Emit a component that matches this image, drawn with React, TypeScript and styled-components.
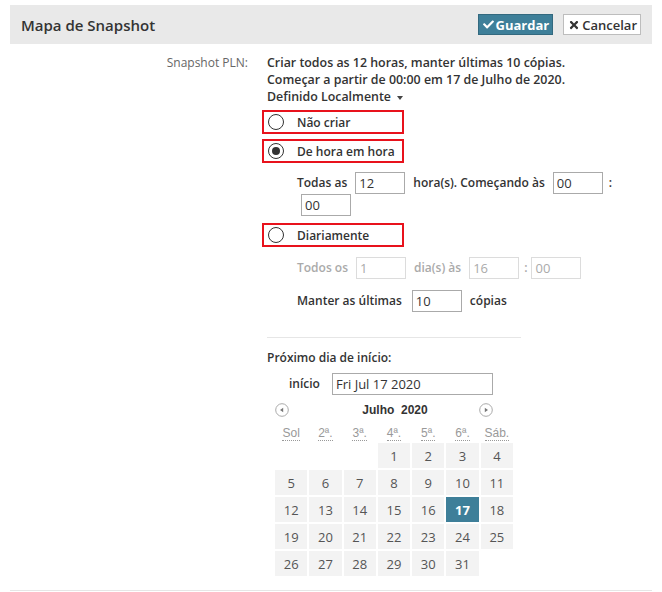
import React from 'react';
import styled, { createGlobalStyle } from 'styled-components';
import { FaCheck, FaTimes } from 'react-icons/fa';

const Global = createGlobalStyle`
  body {
    margin: 0;
    background: #fff;
    font-family: 'Open Sans', 'Liberation Sans', sans-serif;
    color: #333;
  }
`

const Page = styled.div`
  padding: 5px 10px 0 10px;
  width: 662px;
  box-sizing: border-box;
`
const Header = styled.div`
  display: flex;
  align-items: center;
  height: 39px;
  background: #e9e9e9;
  padding: 0 11px;
`
const Title = styled.div`
  flex: 1;
  font-size: 15px;
  font-weight: 600;
  color: #333;
`
const Button = styled.button<{ primary?: boolean }>`
  display: flex;
  align-items: center;
  gap: 2px;
  height: 21px;
  padding: 0 3px 0 4px;
  margin-left: ${p => p.primary ? '0' : '10px'};
  font-family: 'Open Sans', sans-serif;
  font-size: 13px;
  font-weight: ${p => p.primary ? 700 : 600};
  color: ${p => p.primary ? '#fff' : '#333'};
  background: ${p => p.primary ? '#3e7f99' : '#fff'};
  border: 1px solid ${p => p.primary ? '#33697f' : '#bdbdbd'};
  border-radius: 0;
  svg { font-size: ${p => p.primary ? 11 : 12}px; }
`
const Body = styled.div`
  display: grid;
  grid-template-columns: 238px 1fr;
  column-gap: 19px;
  padding-top: 10px;
  padding-bottom: 12px;
  border-bottom: 1px solid #e6e6e6;
`
const Label = styled.div`
  text-align: right;
  font-size: 12px;
  color: #666;
  line-height: 17px;
`
const Content = styled.div`
  display: flex;
  flex-direction: column;
`
const Summary = styled.div`
  font-size: 12.4px;
  font-weight: 600;
  line-height: 17px;
`
const Caret = styled.span`
  display: inline-block;
  margin-left: 6px;
  vertical-align: middle;
  border-left: 3.5px solid transparent;
  border-right: 3.5px solid transparent;
  border-top: 4px solid #444;
`
const Option = styled.label<{ gapTop: number }>`
  display: flex;
  align-items: center;
  width: 142px;
  height: 24px;
  box-sizing: border-box;
  margin-left: -5px;
  margin-top: ${p => p.gapTop}px;
  padding-left: 4px;
  border: 2px solid #e8121c;
  font-size: 12px;
  font-weight: 600;
`
const Radio = styled.span<{ checked?: boolean }>`
  position: relative;
  width: 16px;
  height: 16px;
  box-sizing: border-box;
  border-radius: 50%;
  border: 1.4px solid #333;
  margin-right: 13px;
  &::after {
    content: '';
    display: ${p => p.checked ? 'block' : 'none'};
    position: absolute;
    left: 2.5px;
    top: 2.5px;
    width: 8.2px;
    height: 8.2px;
    border-radius: 50%;
    background: #333;
  }
`
const SubRow = styled.div<{ disabled?: boolean; top: number }>`
  display: flex;
  flex-wrap: wrap;
  align-items: center;
  max-width: 340px;
  margin-left: 30px;
  margin-top: ${p => p.top}px;
  font-size: 12px;
  font-weight: 600;
  color: ${p => p.disabled ? '#aaa' : '#333'};
`
const Text = styled.span<{ gap?: number }>`
  margin-right: ${p => p.gap ?? 8}px;
  line-height: 22px;
`
const Field = styled.input<{ w?: number; gap?: number; indent?: number }>`
  width: ${p => p.w ?? 50}px;
  height: 22px;
  box-sizing: border-box;
  margin: 0 ${p => p.gap ?? 8}px 0 ${p => p.indent ?? 0}px;
  padding: 0 3px;
  border: 1px solid #aaa;
  border-radius: 0;
  font-family: 'Open Sans', sans-serif;
  font-size: 13px;
  color: #333;
  background: #fff;
  &:disabled {
    border-color: #dcdcdc;
    color: #aaa;
  }
`
const Divider = styled.div`
  width: 254px;
  height: 1px;
  background: #e6e6e6;
  margin-top: 25px;
`
const SectionTitle = styled.div`
  margin-top: 11px;
  font-size: 12px;
  font-weight: 600;
  line-height: 17px;
`
const StartRow = styled.div`
  display: flex;
  align-items: center;
  margin: 7px 0 0 22px;
  font-size: 12px;
  font-weight: 600;
`
const Calendar = styled.div`
  margin: 8px 0 0 8px;
  width: 242px;
`
const Nav = styled.div`
  display: flex;
  align-items: center;
  justify-content: space-between;
  width: 218px;
  height: 14px;
  font-family: 'Liberation Sans', Arial, sans-serif;
  font-size: 12px;
  font-weight: 700;
  color: #333;
`
const Month = styled.span`
  white-space: pre;
  margin-left: 22px;
`
const Grid = styled.table`
  border-collapse: separate;
  border-spacing: 2px;
  table-layout: fixed;
  width: 242px;
  margin: 5px 0 0 -2px;
  th {
    height: 17px;
    padding: 0;
    font-family: 'Liberation Sans', Arial, sans-serif;
    font-size: 12px;
    font-weight: 400;
    color: #999;
  }
  abbr {
    text-decoration: none;
    border-bottom: 1px dotted #999;
  }
`
const Day = styled.td<{ active?: boolean; empty?: boolean }>`
  height: 25px;
  padding: 0;
  text-align: center;
  font-size: 13px;
  font-weight: ${p => p.active ? 700 : 400};
  color: ${p => p.active ? '#fff' : '#555'};
  background: ${p => p.empty ? 'transparent' : p.active ? '#3e7f99' : '#f3f3f3'};
`

const Arrow = ({ dir }: { dir: 'left' | 'right' }) => (
  <svg width="14" height="14" viewBox="0 0 14 14">
    <circle cx="7" cy="7" r="6.3" fill="#fff" stroke="#aaa" strokeWidth="1" />
    {dir === 'left'
      ? <path d="M5 7 L8.2 4.8 L8.2 9.2 Z" fill="#777" />
      : <path d="M9 7 L5.8 4.8 L5.8 9.2 Z" fill="#777" />}
  </svg>
)

const heads = [['Sol', 'Domingo'], ['2ª.', 'Segunda'], ['3ª.', 'Terça'], ['4ª.', 'Quarta'], ['5ª.', 'Quinta'], ['6ª.', 'Sexta'], ['Sáb.', 'Sábado']]

function weeks() {
  const cells: (number | null)[] = [null, null, null]
  for (let d = 1; d <= 31; d++) cells.push(d)
  while (cells.length % 7) cells.push(null)
  const rows: (number | null)[][] = []
  for (let i = 0; i < cells.length; i += 7) rows.push(cells.slice(i, i + 7))
  return rows
}

export default function App() {
  return (
    <Page>
      <Global />
      <Header>
        <Title>Mapa de Snapshot</Title>
        <Button primary><FaCheck />Guardar</Button>
        <Button><FaTimes />Cancelar</Button>
      </Header>
      <Body>
        <Label>Snapshot PLN:</Label>
        <Content>
          <Summary>
            Criar todos as 12 horas, manter últimas 10 cópias.<br />
            Começar a partir de 00:00 em 17 de Julho de 2020.<br />
            Definido Localmente<Caret />
          </Summary>
          <Option gapTop={5}><Radio />Não criar</Option>
          <Option gapTop={5}><Radio checked />De hora em hora</Option>
          <SubRow top={9}>
            <Text>Todas as</Text>
            <Field defaultValue="12" />
            <Text>hora(s). Começando às</Text>
            <Field defaultValue="00" gap={6} />
            <Text>:</Text>
            <Field defaultValue="00" indent={4} />
          </SubRow>
          <Option gapTop={7}><Radio />Diariamente</Option>
          <SubRow top={10} disabled>
            <Text>Todos os</Text>
            <Field defaultValue="1" disabled />
            <Text>dia(s) às</Text>
            <Field defaultValue="16" disabled gap={5} />
            <Text gap={4}>:</Text>
            <Field defaultValue="00" disabled />
          </SubRow>
          <SubRow top={11}>
            <Text gap={10}>Manter as últimas</Text>
            <Field defaultValue="10" />
            <Text>cópias</Text>
          </SubRow>
          <Divider />
          <SectionTitle>Próximo dia de início:</SectionTitle>
          <StartRow>
            <Text gap={12}>início</Text>
            <Field defaultValue="Fri Jul 17 2020" w={161} />
          </StartRow>
          <Calendar>
            <Nav>
              <Arrow dir="left" />
              <Month>Julho  2020</Month>
              <Arrow dir="right" />
            </Nav>
            <Grid>
              <thead>
                <tr>{heads.map(([s, t]) => <th key={s}><abbr title={t}>{s}</abbr></th>)}</tr>
              </thead>
              <tbody>
                {weeks().map((row, i) => (
                  <tr key={i}>
                    {row.map((d, j) => (
                      <Day key={j} empty={d === null} active={d === 17}>{d ?? ''}</Day>
                    ))}
                  </tr>
                ))}
              </tbody>
            </Grid>
          </Calendar>
        </Content>
      </Body>
    </Page>
  );
}
